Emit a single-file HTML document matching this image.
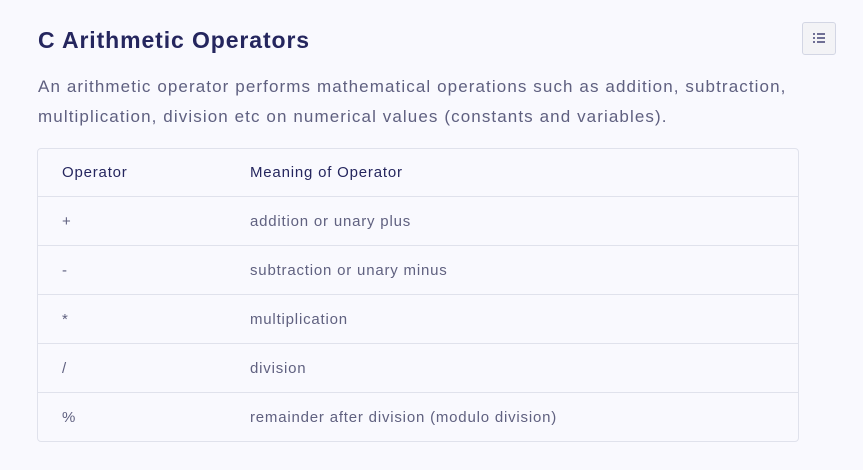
<!DOCTYPE html><html><head><style>
body{margin:0;background:#f9f9fe;font-family:"Liberation Sans",sans-serif;width:863px;height:470px;overflow:hidden;position:relative}
h1{position:absolute;left:38px;top:27px;margin:0;font-size:23px;font-weight:bold;color:#25265e;letter-spacing:0.9px}
p{position:absolute;left:38px;top:72px;margin:0;width:770px;font-size:17px;line-height:30px;color:#5f6080;letter-spacing:1.1px}
.btn{position:absolute;left:802px;top:22px;width:32px;height:31px;border:1px solid #d3d6e4;border-radius:3px;background:#f3f3f6}
table{position:absolute;left:37px;top:148px;width:762px;border-collapse:separate;border-spacing:0;border:1px solid #e0e2ec;border-radius:4px;font-size:15px;letter-spacing:0.8px}
td{height:48px;border-top:1px solid #e0e2ec;padding:0 0 0 24px;color:#606180}
tr:first-child td{height:47px;border-top:none;color:#25265e}
td:first-child{width:164px}
</style></head><body>
<h1>C Arithmetic Operators</h1>
<div class="btn"><svg width="32" height="31" viewBox="0 0 32 31"><g stroke="#6f6f95" stroke-width="2"><path d="M10 11h2M14 11h8M10 15h2M14 15h8M10 19h2M14 19h8"/></g></svg></div>
<p>An arithmetic operator performs mathematical operations such as addition, subtraction, multiplication, division etc on numerical values (constants and variables).</p>
<table>
<tr><td>Operator</td><td>Meaning of Operator</td></tr>
<tr><td>+</td><td>addition or unary plus</td></tr>
<tr><td>-</td><td>subtraction or unary minus</td></tr>
<tr><td>*</td><td>multiplication</td></tr>
<tr><td>/</td><td>division</td></tr>
<tr><td>%</td><td>remainder after division (modulo division)</td></tr>
</table>
</body></html>
